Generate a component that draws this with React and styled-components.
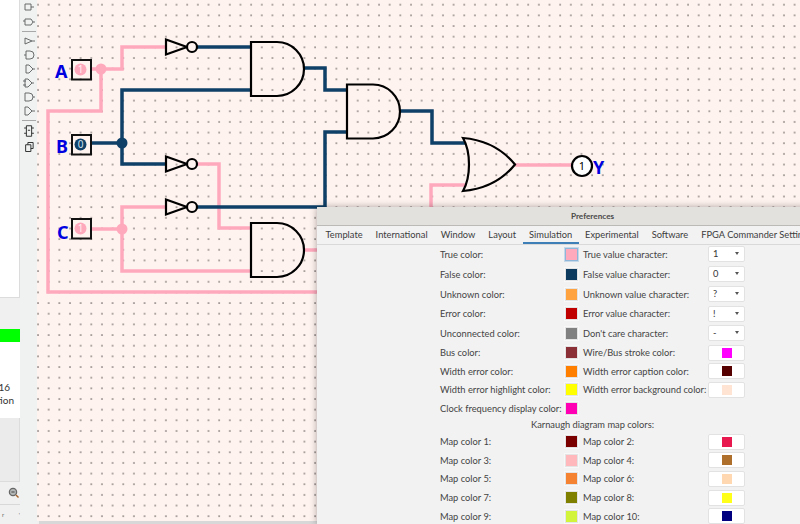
import React from "react"
import styled, { createGlobalStyle } from "styled-components"

const PINK = "#ffa9bd"
const NAVY = "#0f4068"

const tabs = ["Template", "International", "Window", "Layout", "Simulation", "Experimental", "Software", "FPGA Commander Settings"]

const colorRows = [
  { h: 20, label: "True color:", swatch: PINK, focus: true, right: "True value character:", combo: "1" },
  { h: 20, label: "False color:", swatch: "#0d3a5f", right: "False value character:", combo: "0" },
  { h: 20, label: "Unknown color:", swatch: "#ffa340", right: "Unknown value character:", combo: "?" },
  { h: 19.5, label: "Error color:", swatch: "#c00000", right: "Error value character:", combo: "!" },
  { h: 19.5, label: "Unconnected color:", swatch: "#808080", right: "Don't care character:", combo: "-" },
  { h: 19, label: "Bus color:", swatch: "#8a3036", right: "Wire/Bus stroke color:", color: "#ff00ff" },
  { h: 18.5, label: "Width error color:", swatch: "#ff7f00", right: "Width error caption color:", color: "#560000" },
  { h: 18.5, label: "Width error highlight color:", swatch: "#ffff00", right: "Width error background color:", color: "#ffe4d3" },
  { h: 18.5, label: "Clock frequency display color:", swatch: "#ff00b4" },
]

const mapRows = [
  ["#7a0000", "#e8194f"],
  ["#ffb9bd", "#ae6e2c"],
  ["#f58231", "#ffd8b1"],
  ["#808000", "#ffff19"],
  ["#d2f53c", "#000080"],
]

const toolIcons = [
  { d: "M3 1h6v6H3z M9 4h3" },
  { d: "M3 2h6l2 3-2 3H3z M1 4h2 M11 5h2" },
  { sep: true },
  { d: "M3 2l7 3-7 3z M10 5h3" },
  { d: "M4 1h4a4 4 0 0 1 0 8H4z M2 5h2" },
  { d: "M4 1l3 0 4 4-4 4H4z M11 5h2" },
  { d: "M3 1h3l4 4-4 4H3z M1 3h3 M1 7h3 M10 5h2" },
  { d: "M3 1h4a4 4 0 0 1 0 8H3z M11 5h2" },
  { d: "M3 1h3l4 4-4 4H3z M10 5h3" },
  { sep: true },
  { big: true, d: "M4 1h7v14H4z M1 4h3 M1 11h3 M11 4h3 M11 11h3 M6 7h3" },
  { big: true, d: "M3 5h7v9H3z M6 5V2h7v8h-3" },
]

export default function App() {
  return (
    <Page>
      <GlobalStyle />
      <SidePanel>
        <ExplorerPane />
        <Gap $h={31} />
        <GreenBar />
        <InfoPane>
          <InfoLine $pad={10}>16</InfoLine>
          <InfoLine $pad={6}>tion</InfoLine>
        </InfoPane>
        <AttrPane />
        <ZoomRow>
          <svg width="12" height="12" viewBox="0 0 12 12">
            <circle cx="5" cy="5" r="3.6" fill="#b5b8b8" stroke="#666" strokeWidth="1.3" />
            <path d="M3.4 5h3.2" stroke="#444" strokeWidth="1" />
            <path d="M8 8l2.5 2.5" stroke="#a5622a" strokeWidth="1.4" />
          </svg>
        </ZoomRow>
        <PanelTabs>
          <span>r</span>
          <span>'</span>
        </PanelTabs>
      </SidePanel>
      <Toolbar>
        {toolIcons.map((icon, i) =>
          icon.sep ? (
            <ToolSep key={i} />
          ) : (
            <ToolIcon key={i} $big={icon.big} viewBox={icon.big ? "0 0 15 16" : "0 0 14 10"}>
              <path d={icon.d} fill="none" stroke={icon.big ? "#2f3131" : "#5a5d5d"} strokeWidth={icon.big ? 1.3 : 0.9} />
            </ToolIcon>
          )
        )}
      </Toolbar>
      <Workspace>
        <Canvas>
          <Circuit />
        </Canvas>
        <HScroll />
      </Workspace>
      <Dialog>
        <TitleBar>Preferences</TitleBar>
        <TabBar>
          {tabs.map((t) => (
            <Tab key={t} $active={t === "Simulation"}>{t}</Tab>
          ))}
        </TabBar>
        <Form>
          {colorRows.map((r) => (
            <Row key={r.label} $h={r.h}>
              <Label>{r.label}</Label>
              <Swatch $color={r.swatch} $focus={r.focus} />
              <Label>{r.right}</Label>
              {r.combo && (
                <Combo>
                  {r.combo}
                  <Caret />
                </Combo>
              )}
              {r.color && (
                <ColorButton>
                  <Chip $color={r.color} />
                </ColorButton>
              )}
            </Row>
          ))}
          <Heading>Karnaugh diagram map colors:</Heading>
          {mapRows.map(([a, b], i) => (
            <Row key={a} $h={18.6}>
              <Label>Map color {i * 2 + 1}:</Label>
              <Swatch $color={a} />
              <Label>Map color {i * 2 + 2}:</Label>
              <ColorButton>
                <Chip $color={b} />
              </ColorButton>
            </Row>
          ))}
        </Form>
      </Dialog>
    </Page>
  )
}

function Circuit() {
  return (
    <Schematic viewBox="37 0 763 521">
      <Wire d="M91 69H122V47H166" $c={PINK} />
      <Wire d="M101 69V111H48V292H320" $c={PINK} />
      <Wire d="M197 47H251" $c={NAVY} />
      <Wire d="M91 143H122 M251 90H122V164H166" $c={NAVY} />
      <Wire d="M197 164H219V228H251" $c={PINK} />
      <Wire d="M91 229H122 M166 207H122V271H251" $c={PINK} />
      <Wire d="M197 207H325V132H347" $c={NAVY} />
      <Wire d="M304 68H325V90H347" $c={NAVY} />
      <Wire d="M400 111H432V143H465" $c={NAVY} />
      <Wire d="M304 250H320" $c={PINK} />
      <Wire d="M465 185H431V207" $c={PINK} />
      <Wire d="M515 165H572" $c={PINK} />
      <circle cx="101" cy="69" r="5.5" fill={PINK} />
      <circle cx="122" cy="143" r="5.5" fill={NAVY} />
      <circle cx="122" cy="229" r="5.5" fill={PINK} />

      <InputPin y={60} value="1" fill={PINK} ink="#fff0f2" />
      <InputPin y={135} value="0" fill={NAVY} ink="#cfe0ee" />
      <InputPin y={219} value="1" fill={PINK} ink="#fff0f2" />

      <PinName x="55" y="78">A</PinName>
      <PinName x="56" y="153">B</PinName>
      <PinName x="57" y="239">C</PinName>

      <Inverter y={47} />
      <Inverter y={164} />
      <Inverter y={207} />

      <AndGate x={251} y={42} />
      <AndGate x={347} y={84.5} />
      <AndGate x={251} y={223} />

      <Gate d="M463 138C471 152 471 177 463 191C487 189 504 178 515 164.500C504 151 487 140 463 138Z" />

      <circle cx="582" cy="166" r="10" fill="#fff" stroke="#000" strokeWidth="2.2" />
      <PinValue x="582" y="170" fill="#000" fontSize="11">1</PinValue>
      <PinName x="593" y="174">Y</PinName>
    </Schematic>
  )
}

function InputPin({ y, value, fill, ink }) {
  return (
    <g>
      <rect x="72" y={y} width="19" height="19.500" fill="none" stroke="#111" strokeWidth="2" />
      <circle cx="80.500" cy={y + 9.5} r="6" fill={fill} />
      <PinValue x="80.500" y={y + 13} fill={ink} fontSize="10">{value}</PinValue>
    </g>
  )
}

function Inverter({ y }) {
  return (
    <g>
      <Gate d={`M166 ${y - 7.500}L187 ${y}L166 ${y + 7.500}Z`} />
      <circle cx="192" cy={y} r="5" fill="#fff3ef" stroke="#000" strokeWidth="2.2" />
    </g>
  )
}

function AndGate({ x, y }) {
  return <Gate d={`M${x} ${y}H${x + 26}A27 27 0 0 1 ${x + 26} ${y + 54}H${x}Z`} />
}

const GlobalStyle = createGlobalStyle`
  html, body {
    margin: 0;
    padding: 0;
    overflow: hidden;
    font-family: Lato, "Noto Sans", sans-serif;
  }
`

const Page = styled.div`
  position: relative;
  display: flex;
  width: 800px;
  height: 524px;
  overflow: hidden;
  background: #f0f0f0;
`

const SidePanel = styled.div`
  width: 20px;
  display: flex;
  flex-direction: column;
  flex-shrink: 0;
`

const ExplorerPane = styled.div`
  height: 298px;
  flex-shrink: 0;
  background: #fff;
  border-right: 1px solid #dcdcdc;
  border-bottom: 1px solid #dcdcdc;
  box-sizing: border-box;
`

const Gap = styled.div`
  height: ${(p) => p.$h}px;
  flex-shrink: 0;
`

const GreenBar = styled.div`
  height: 13px;
  flex-shrink: 0;
  background: #00ff00;
`

const InfoPane = styled.div`
  height: 76px;
  flex-shrink: 0;
  background: #fff;
  padding-top: 39px;
  box-sizing: border-box;
`

const InfoLine = styled.div`
  height: 13px;
  line-height: 13px;
  font-size: 10px;
  color: #333;
  white-space: nowrap;
  display: flex;
  justify-content: flex-end;
  padding-right: ${(p) => p.$pad}px;
`

const AttrPane = styled.div`
  height: 64px;
  flex-shrink: 0;
  background: #ebebeb;
  border-right: 1px solid #dcdcdc;
  border-bottom: 1px solid #dcdcdc;
  box-sizing: border-box;
`

const ZoomRow = styled.div`
  width: 37px;
  height: 22px;
  flex-shrink: 0;
  display: flex;
  justify-content: flex-end;
  align-items: center;
  padding-right: 17px;
  box-sizing: border-box;
`

const PanelTabs = styled.div`
  width: 20px;
  flex: 1;
  border-top: 1px solid #d8d8d8;
  font-size: 6px;
  color: #666;
  display: flex;
  justify-content: space-between;
  padding: 6px 0 0 2px;
  box-sizing: border-box;
`

const Toolbar = styled.div`
  width: 17px;
  flex-shrink: 0;
  height: 100%;
  display: flex;
  flex-direction: column;
  align-items: center;
  padding-top: 3px;
  gap: 4px;
  box-sizing: border-box;
  background: #f0f1f1;
`

const ToolIcon = styled.svg`
  width: 14px;
  height: ${(p) => (p.$big ? 12 : 10)}px;
  flex-shrink: 0;
`

const ToolSep = styled.div`
  width: 14px;
  height: 1px;
  flex-shrink: 0;
  background: #a8a8a8;
`

const Workspace = styled.div`
  flex: 1;
  display: flex;
  flex-direction: column;
  min-width: 0;
`

const Canvas = styled.div`
  flex: 1;
  background-color: #fff3ef;
  background-image: radial-gradient(circle at 1px 1px, #6a6462 0.45px, transparent 0.95px);
  background-size: 10.667px 10.667px;
  background-position: 0 3.700px;
`

const HScroll = styled.div`
  height: 3px;
  margin-left: 2px;
  background: #d8d8d8;
`

const Schematic = styled.svg`
  display: block;
  width: 763px;
  height: 521px;
`

const Wire = styled.path.attrs((p) => ({ stroke: p.$c }))`
  fill: none;
  stroke-width: 3.500;
`

const Gate = styled.path`
  fill: none;
  stroke: #000;
  stroke-width: 2.200;
`

const PinName = styled.text`
  font-family: "Noto Sans", sans-serif;
  font-size: 18px;
  font-weight: 700;
  fill: #0000e0;
`

const PinValue = styled.text`
  font-family: "Noto Sans", sans-serif;
  text-anchor: middle;
`

const Dialog = styled.div`
  position: absolute;
  left: 317px;
  top: 207px;
  width: 551px;
  height: 317px;
  background: #f2f2f2;
  box-shadow: 0 0 7px rgba(0, 0, 0, 0.35);
  font-size: 9.300px;
  color: #444;
`

const TitleBar = styled.div`
  height: 19px;
  line-height: 18px;
  text-align: center;
  font-weight: 700;
  font-size: 8.200px;
  color: #4a4a4a;
  background: #e3e1de;
  border-bottom: 1px solid #bcbab6;
  box-sizing: border-box;
`

const TabBar = styled.div`
  display: flex;
  height: 18px;
  padding-left: 2px;
  border-bottom: 1px solid #d9d9d9;
  white-space: nowrap;
`

const Tab = styled.div`
  padding: 0 6.500px;
  line-height: 17px;
  color: #3c3c3c;
  border-bottom: ${(p) => (p.$active ? "2px solid #3f7fb8" : "none")};
  height: ${(p) => (p.$active ? 18 : 17)}px;
  box-sizing: border-box;
`

const Form = styled.div`
  margin-top: -1px;
  padding: 0 0 0 123px;
  display: flex;
  flex-direction: column;
`

const Row = styled.div`
  display: grid;
  grid-template-columns: 125px 18px 125px 37px;
  align-items: center;
  height: ${(p) => p.$h}px;
  white-space: nowrap;
`

const Label = styled.div`
  min-width: 0;
`

const Swatch = styled.div`
  width: 11px;
  height: 11px;
  background: ${(p) => p.$color};
  border: 1px solid ${(p) => (p.$focus ? "#8db6d8" : "#e4e4e4")};
  outline: 1px solid ${(p) => (p.$focus ? "#c4d8e9" : "#f8f8f8")};
`

const Combo = styled.div`
  position: relative;
  height: 14px;
  line-height: 14px;
  padding-left: 4px;
  background: #fff;
  border: 1px solid #e2e2e2;
  border-radius: 2px;
  color: #333;
`

const Caret = styled.span`
  position: absolute;
  right: 5px;
  top: 5px;
  border-left: 2.500px solid transparent;
  border-right: 2.500px solid transparent;
  border-top: 3px solid #555;
`

const ColorButton = styled.div`
  height: 14px;
  background: #fff;
  border: 1px solid #e2e2e2;
  border-radius: 2px;
  display: flex;
  align-items: center;
  justify-content: center;
`

const Chip = styled.div`
  width: 10px;
  height: 10px;
  background: ${(p) => p.$color};
`

const Heading = styled.div`
  height: 15px;
  line-height: 13px;
  padding-left: 91px;
`
